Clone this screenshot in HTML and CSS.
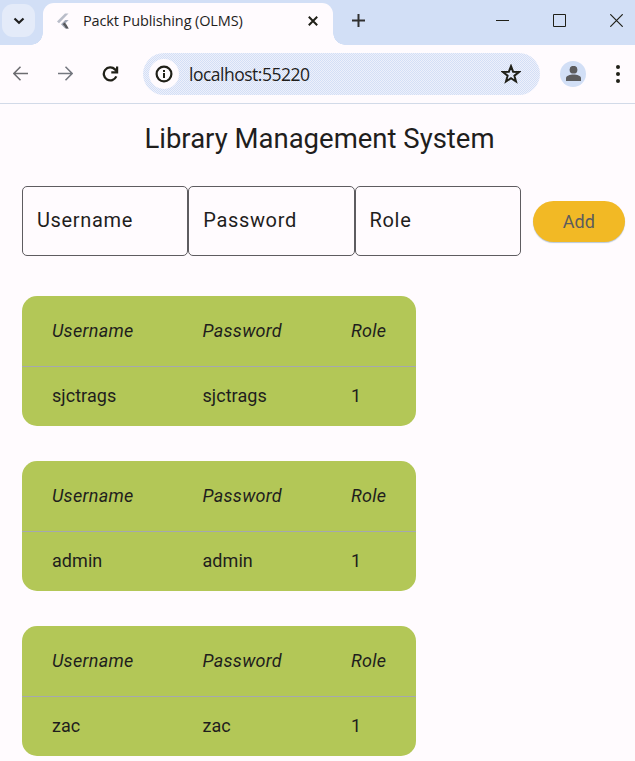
FILE: index.html
```html
<!DOCTYPE html>
<html lang="en">
<head>
<meta charset="utf-8">
<title>Packt Publishing (OLMS)</title>
<link rel="stylesheet" href="styles.css">
</head>
<body>
<header>
  <div class="tabstrip">
    <div class="search-cell"><span class="tab-search"><svg width="12" height="8" viewBox="0 0 12 8"><path d="M1.5 1.5 6 5.8l4.5-4.3" fill="none" stroke="#202020" stroke-width="2.2"/></svg></span></div>
    <div class="tab">
      <svg class="flutter" width="14" height="16" viewBox="0 0 14 16"><path d="M0 8.5 8 .5h3.5L2 10.3z" fill="#b9bdc9"/><path d="M4 11.2 8.2 7h3.5l-4.2 4.2 4.2 4.3H8.2z" fill="#a3a9b8"/><path d="m5.7 11.2 1.8-1.8 1.9 1.8-1.9 1.9zM7.5 13.1l1.9-1.6 2.3 4H9z" fill="#55565a"/></svg>
      <span class="tab-title">Packt Publishing (OLMS)</span>
      <svg class="close" width="10" height="10" viewBox="0 0 10 10"><path d="m.8.8 8.4 8.4m0-8.4L.8 9.2" stroke="#202018" stroke-width="2"/></svg>
    </div>
    <svg class="new-tab" width="13" height="13" viewBox="0 0 13 13"><path d="M6.5 0v13M0 6.5h13" stroke="#303030" stroke-width="2"/></svg>
    <div class="window-controls">
      <svg width="13" height="13" viewBox="0 0 13 13"><path d="M0 6.5h13" stroke="#202018"/></svg>
      <svg width="13" height="13" viewBox="0 0 13 13"><path d="M.5.5h12v12H.5z" fill="none" stroke="#202018"/></svg>
      <svg width="13" height="13" viewBox="0 0 13 13"><path d="m.3.3 12.4 12.4m0-12.4L.3 12.7" stroke="#202018" stroke-width="1.2"/></svg>
    </div>
  </div>
  <div class="toolbar">
    <svg class="back" width="15" height="15" viewBox="0 0 15 15"><path d="M7.5.8.9 7.5l6.6 6.7M1 7.5h14" fill="none" stroke="#6c6c70" stroke-width="1.5"/></svg>
    <svg class="forward" width="15" height="15" viewBox="0 0 15 15"><path d="m7.5.8 6.6 6.7-6.6 6.7M14 7.5H0" fill="none" stroke="#74777f" stroke-width="1.5"/></svg>
    <svg class="reload" width="17" height="16" viewBox="0 0 17 16"><path d="M14.3 10.4A6.5 6.5 0 1 1 13 3.4l1.8 2" fill="none" stroke="#202018" stroke-width="2.3"/><path d="M15.1.4v6H9.3" fill="none" stroke="#202018" stroke-width="2.2"/></svg>
    <div class="address">
      <span class="info"><svg width="18" height="18" viewBox="0 0 18 18"><circle cx="9" cy="9" r="7.4" fill="none" stroke="#202018" stroke-width="2.2"/><path d="M9 8v5M9 5v2" stroke="#202018" stroke-width="2"/></svg></span>
      <span class="url">localhost:55220</span>
      <svg class="star" width="20" height="20" viewBox="0 0 20 20"><path d="m10 2.2 2.1 5.5 5.9.3-4.6 3.7 1.6 5.8-5-3.3-5 3.3 1.6-5.8L2 8l5.9-.3z" fill="none" stroke="#202018" stroke-width="2"/></svg>
    </div>
    <span class="avatar"><svg width="15" height="15" viewBox="0 0 15 15"><circle cx="7.5" cy="3.7" r="3.9" fill="#5c5c5e"/><path d="M0 15v-3c0-2 4-3.5 7.5-3.5S15 10 15 12v3z" fill="#5c5c5e"/></svg></span>
    <svg class="menu" width="4" height="18" viewBox="0 0 4 18"><g fill="#202018"><circle cx="2" cy="2" r="2"/><circle cx="2" cy="9" r="2"/><circle cx="2" cy="16" r="2"/></g></svg>
  </div>
</header>
<main>
  <h1>Library Management System</h1>
  <div class="form">
    <div class="field">Username</div>
    <div class="field">Password</div>
    <div class="field">Role</div>
    <button class="add" type="button">Add</button>
  </div>
  <section class="card">
    <div class="row head"><span>Username</span><span>Password</span><span>Role</span></div>
    <div class="row"><span>sjctrags</span><span>sjctrags</span><span>1</span></div>
  </section>
  <section class="card">
    <div class="row head"><span>Username</span><span>Password</span><span>Role</span></div>
    <div class="row"><span>admin</span><span>admin</span><span>1</span></div>
  </section>
  <section class="card">
    <div class="row head"><span>Username</span><span>Password</span><span>Role</span></div>
    <div class="row"><span>zac</span><span>zac</span><span>1</span></div>
  </section>
</main>
</body>
</html>
```
FILE: styles.css
```css
* { box-sizing: border-box; }
body { margin: 0; width: 635px; height: 761px; overflow: hidden; background: #fffbfe; color: #1f1e1d; font-family: Roboto, sans-serif; }
svg { display: block; flex: none; }
.tabstrip { display: flex; height: 45px; background: #d2dff6; }
.search-cell { width: 43px; padding: 4px 0 0 2px; }
.tab-search { display: flex; width: 33px; height: 33px; border-radius: 11px; background: #e4ebf9; align-items: center; justify-content: center; }
.tab { position: relative; display: flex; align-items: center; width: 290px; height: 42px; margin-top: 3px; padding: 0 15px 7px 14px; background: #fffbfe; border-radius: 11px 11px 0 0; }
.tab::before, .tab::after { content: ""; position: absolute; bottom: 0; width: 12px; height: 12px; }
.tab::before { left: -12px; background: radial-gradient(circle at 0 0, transparent 11.5px, #fffbfe 12px); }
.tab::after { right: -12px; background: radial-gradient(circle at 100% 0, transparent 11.5px, #fffbfe 12px); }
.tab-title { margin-left: 12px; font: 14.5px/20px "Open Sans", sans-serif; letter-spacing: -.12px; white-space: nowrap; }
.close { margin-left: auto; }
.new-tab { margin: 14px 0 0 19px; }
.window-controls { display: flex; gap: 44px; margin: 14px 12px 0 auto; }
.toolbar { display: flex; align-items: center; height: 59px; padding: 0 15px 1px 13px; border-bottom: 1px solid #d2dae8; }
.forward { margin-left: 30px; }
.reload { margin-left: 29px; }
.address { display: flex; align-items: center; width: 397px; height: 42px; margin-left: 24px; padding: 0 19px 0 6px; border-radius: 21px; background: conic-gradient(#eef0fb 25%, #d3dff6 0 50%, #eef0fb 0 75%, #d3dff6 0) 0 0 / 2px 2px; }
.info { display: flex; align-items: center; justify-content: center; width: 30px; height: 30px; border-radius: 50%; background: #fffbfe; }
.url { margin-left: 10px; font: 17.5px/24px "Open Sans", sans-serif; letter-spacing: -.5px; }
.star { margin-left: auto; }
.avatar { display: flex; align-items: center; justify-content: center; width: 26px; height: 26px; margin-left: 20px; border-radius: 50%; background: #d2dff6; }
.menu { margin-left: auto; }
main { padding: 17px 10px 0 22px; }
h1 { margin: 0 0 29px; padding-right: 8px; text-align: center; font-size: 27.5px; line-height: 36px; font-weight: 400; }
.form { display: flex; align-items: center; height: 70px; margin-bottom: 40px; }
.field { width: 166.3px; height: 70px; padding-left: 14px; border: 1.5px solid #5e5c60; border-radius: 5px; font-size: 20px; line-height: 67px; letter-spacing: .65px; }
.add { width: 92px; height: 41px; margin-left: 12px; padding: 0; border: 0; border-radius: 21px; background: #f2b925; color: #5d5d5d; font: 18px/39px Roboto, sans-serif; letter-spacing: .1px; box-shadow: 0 1px 1px #b9c8d8; }
.card { width: 394px; height: 130px; margin-bottom: 35px; border-radius: 15px; background: #b3c757; overflow: hidden; }
.row { display: grid; grid-template-columns: 150.5px 148.5px 1fr; height: 59px; padding-left: 30px; font-size: 18px; line-height: 58px; letter-spacing: .05px; }
.head { height: 71px; line-height: 70px; letter-spacing: .3px; border-bottom: 1px solid #a5a8b0; font-style: italic; }
```
